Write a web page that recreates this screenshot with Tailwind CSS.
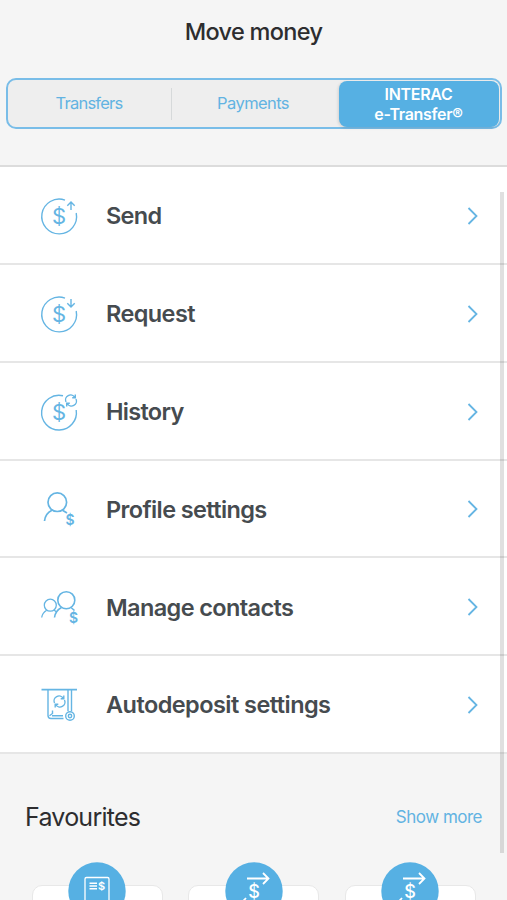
<!DOCTYPE html>
<html lang="en">
<head>
<meta charset="utf-8">
<title>Move money</title>
<script src="https://cdn.jsdelivr.net/npm/@tailwindcss/browser@4"></script>
</head>
<body class="bg-[#f5f5f5] font-['Inter','Liberation_Sans',sans-serif] w-[507px] h-[900px] overflow-hidden relative">
<svg class="hidden">
  <defs>
    <g id="coin"><path d="M30 8.1A17.4 17.4 0 1 0 41.2 21"/><text x="24" y="32" font-size="22" font-weight="400" text-anchor="middle" fill="#65b5e3" stroke="none">$</text></g>
    <g id="cycle"><path d="M-5 1.5A5 5 0 0 1 3.8-3.2M5-1.5A5 5 0 0 1-3.8 3.2M4.3-6V-2.8H1.2M-4.3 6V2.8H-1.2"/></g>
    <path id="chevron" d="M1.5 1 9.5 9 1.5 17"/>
  </defs>
</svg>
<header class="h-[167px] border-b-2 border-[#dcdcdc] flex flex-col">
  <h1 class="mt-[14px] h-9 leading-9 text-center text-[23.5px] font-medium tracking-[-0.7px] text-[#2d2d2f]">Move money</h1>
  <div class="mt-[28px] mx-[5.5px] h-[51px] rounded-[10px] border-2 border-[#79bde8] bg-[#eeeeee] flex items-center text-base text-[#62b3e2]">
    <div class="w-[163px] text-center tracking-[-0.75px] text-[16.5px]">Transfers</div>
    <div class="w-px h-8 bg-[#d6d9da]"></div>
    <div class="w-[163px] text-center tracking-[-0.6px] text-[16.5px]">Payments</div>
    <div class="flex-1 ml-1 mr-px h-[46px] rounded-[8px] bg-[#56b0e3] text-white text-center font-semibold leading-5 pt-[3px] tracking-[-0.3px] shadow-[-1px_1px_3px_rgba(0,0,0,0.12)]">INTERAC<br>e-Transfer®</div>
  </div>
</header>
<main class="grid grid-rows-6 h-[587px] bg-white text-[23.5px] font-semibold text-[#464b4f]">
  <a class="border-b-2 border-[#e6e6e6] flex items-center pt-[2px] pl-[35px] pr-7">
    <svg class="size-12 mr-[23px]" viewBox="0 0 48 48" fill="none" stroke="#65b5e3" stroke-width="1.4"><use href="#coin"/><path d="M36 18V10M32.3 13.7 36 10l3.7 3.7"/></svg>
    <span class="flex-1 tracking-[-0.7px]">Send</span>
    <svg class="w-3 h-[18px]" viewBox="0 0 12 18" fill="none" stroke="#65b5e3" stroke-width="1.8"><use href="#chevron"/></svg>
  </a>
  <a class="border-b-2 border-[#e6e6e6] flex items-center pt-[2px] pl-[35px] pr-7">
    <svg class="size-12 mr-[23px]" viewBox="0 0 48 48" fill="none" stroke="#65b5e3" stroke-width="1.4"><use href="#coin"/><path d="M36 9V17M32.3 13.3 36 17l3.7-3.7"/></svg>
    <span class="flex-1 tracking-[-0.6px]">Request</span>
    <svg class="w-3 h-[18px]" viewBox="0 0 12 18" fill="none" stroke="#65b5e3" stroke-width="1.8"><use href="#chevron"/></svg>
  </a>
  <a class="border-b-2 border-[#e6e6e6] flex items-center pt-[2px] pl-[35px] pr-7">
    <svg class="size-12 mr-[23px]" viewBox="0 0 48 48" fill="none" stroke="#65b5e3" stroke-width="1.4"><path d="M28 7.7A17.4 17.4 0 1 0 41.2 22"/><text x="24" y="32" font-size="22" font-weight="400" text-anchor="middle" fill="#65b5e3" stroke="none">$</text><use href="#cycle" x="36" y="12.5"/></svg>
    <span class="flex-1 tracking-[-0.7px]">History</span>
    <svg class="w-3 h-[18px]" viewBox="0 0 12 18" fill="none" stroke="#65b5e3" stroke-width="1.8"><use href="#chevron"/></svg>
  </a>
  <a class="border-b-2 border-[#e6e6e6] flex items-center pt-[2px] pl-[35px] pr-7">
    <svg class="size-12 mr-[23px]" viewBox="0 0 48 48" fill="none" stroke="#65b5e3" stroke-width="1.7"><circle cx="22.3" cy="17.2" r="9.3"/><path d="M9.5 36C10 31 12.5 27.3 17 25.2M27.5 25.2 32 28"/><text x="35" y="40" font-size="14" font-weight="600" text-anchor="middle" fill="#65b5e3" stroke="none">$</text></svg>
    <span class="flex-1 tracking-[-0.62px]">Profile settings</span>
    <svg class="w-3 h-[18px]" viewBox="0 0 12 18" fill="none" stroke="#65b5e3" stroke-width="1.8"><use href="#chevron"/></svg>
  </a>
  <a class="border-b-2 border-[#e6e6e6] flex items-center pt-[2px] pl-[35px] pr-7">
    <svg class="size-12 mr-[23px]" viewBox="0 0 48 48" fill="none" stroke="#65b5e3" stroke-width="1.6"><circle cx="31.3" cy="17.2" r="8.5"/><circle cx="15.3" cy="22.2" r="6" stroke-width="1.3"/><path d="M19.5 34.5C20 29.8 22.5 26.7 26.5 24.5M36 24.5 39.5 27.5"/><path stroke-width="1.3" d="M6.7 34.5C7 31.5 8.8 29 11.7 27.2M19 27 21.5 29"/><text x="38.5" y="40" font-size="14" font-weight="600" text-anchor="middle" fill="#65b5e3" stroke="none">$</text></svg>
    <span class="flex-1 tracking-[-0.62px]">Manage contacts</span>
    <svg class="w-3 h-[18px]" viewBox="0 0 12 18" fill="none" stroke="#65b5e3" stroke-width="1.8"><use href="#chevron"/></svg>
  </a>
  <a class="border-b-2 border-[#e6e6e6] flex items-center pt-[2px] pl-[35px] pr-7">
    <svg class="size-12 mr-[23px]" viewBox="0 0 48 48" fill="none" stroke="#65b5e3" stroke-width="1.4"><path stroke-width="1.8" d="M6.5 8.7H42"/><path d="M13 9V34.5Q13 37.5 16 37.5H28.5M17.5 29.5V32.5L14.5 34.8M17 34.8H28M33 9V30M36.5 9V30"/><use href="#cycle" x="24.5" y="20.5"/><circle cx="35" cy="35" r="4.3"/><circle cx="35" cy="35" r="1.7"/></svg>
    <span class="flex-1 tracking-[-0.55px]">Autodeposit settings</span>
    <svg class="w-3 h-[18px]" viewBox="0 0 12 18" fill="none" stroke="#65b5e3" stroke-width="1.8"><use href="#chevron"/></svg>
  </a>
</main>
<section class="h-[146px] overflow-hidden">
  <div class="mt-[46px] h-9 pl-[25px] pr-[25px] flex items-center justify-between">
    <h2 class="text-[25px] tracking-[-0.75px] text-[#2d2d2f]">Favourites</h2>
    <a class="text-[17px] tracking-[-0.5px] text-[#62b3e2]">Show more</a>
  </div>
  <div class="mt-[26px] pl-[31.5px] flex gap-[25.5px]">
    <div class="w-[131px] flex flex-col items-center">
      <svg class="size-[58px] z-10" viewBox="0 0 58 58" fill="none" stroke="#fff"><circle cx="29" cy="29" r="28.7" fill="#56b0e3" stroke="none"/><rect x="17" y="15.5" width="24" height="34" rx="1.5" stroke-width="1.3"/><path stroke-width="1.4" d="M21.5 21.3H29M21.5 24H29M21.5 26.8H29"/><text x="33.5" y="28" font-size="11" font-weight="600" text-anchor="middle" fill="#fff" stroke="none">$</text></svg>
      <div class="-mt-[35px] w-full h-40 rounded-[10px] bg-white border border-[#e8e8e8]"></div>
    </div>
    <div class="w-[131px] flex flex-col items-center">
      <svg class="size-[58px] z-10" viewBox="0 0 58 58" fill="none" stroke="#fff" stroke-width="1.8"><circle cx="29" cy="29" r="28.7" fill="#56b0e3" stroke="none"/><path d="M22 16.5H43.5M38 11 43.5 16.5 38 22M36 42H15M21 36 15.5 42 21 47.5"/><text x="29" y="35.5" font-size="18" font-weight="500" text-anchor="middle" fill="#fff" stroke="none">$</text></svg>
      <div class="-mt-[35px] w-full h-40 rounded-[10px] bg-white border border-[#e8e8e8]"></div>
    </div>
    <div class="w-[131px] flex flex-col items-center">
      <svg class="size-[58px] z-10" viewBox="0 0 58 58" fill="none" stroke="#fff" stroke-width="1.8"><circle cx="29" cy="29" r="28.7" fill="#56b0e3" stroke="none"/><path d="M22 16.5H43.5M38 11 43.5 16.5 38 22M36 42H15M21 36 15.5 42 21 47.5"/><text x="29" y="35.5" font-size="18" font-weight="500" text-anchor="middle" fill="#fff" stroke="none">$</text></svg>
      <div class="-mt-[35px] w-full h-40 rounded-[10px] bg-white border border-[#e8e8e8]"></div>
    </div>
  </div>
</section>
<div class="absolute top-48 left-[499.5px] w-1 h-[661px] bg-black/12"></div>
</body>
</html>
